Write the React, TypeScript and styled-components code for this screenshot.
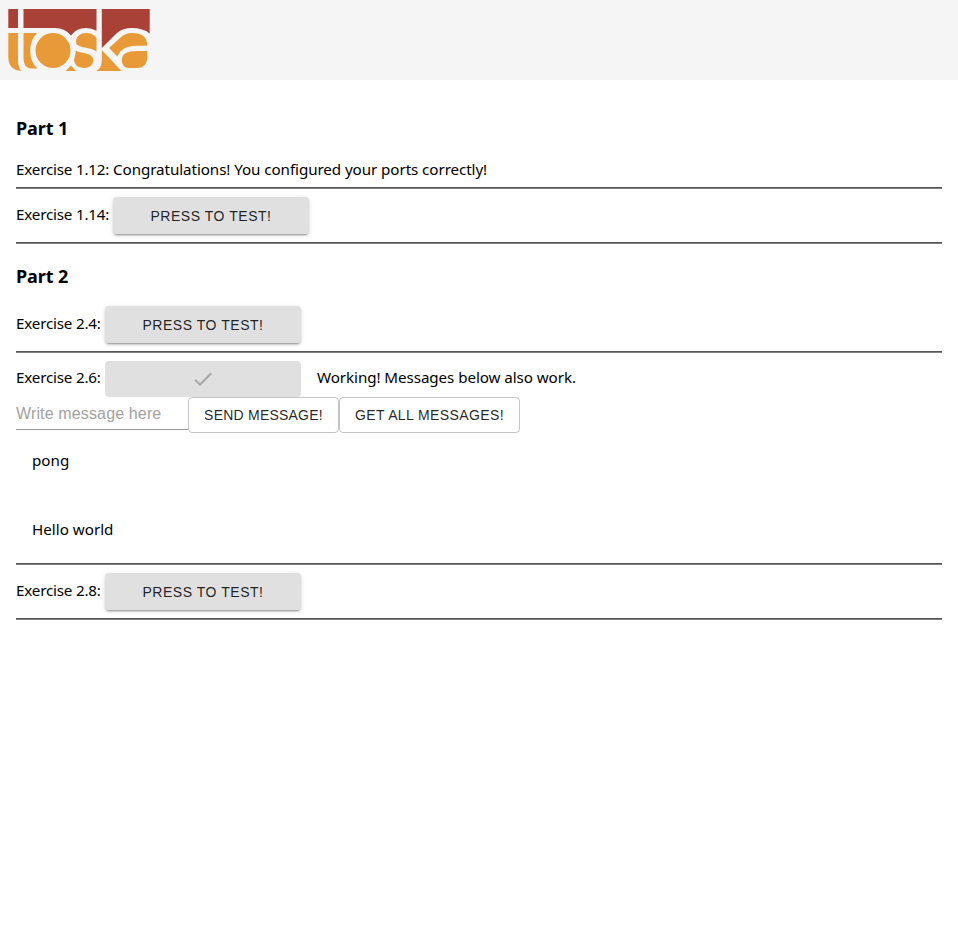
import React from "react";
import styled, { createGlobalStyle } from "styled-components";

const GlobalStyle = createGlobalStyle`
  body {
    margin: 0;
    background: #fff;
    color: #000;
    font: 15.2px/21px "Segoe UI", "Noto Sans", sans-serif;
  }
`;

const Header = styled.header`
  height: 80px;
  background: #f5f5f5;
`;

const Logo = styled.svg`
  display: block;
  width: 158px;
  height: 80px;
`;

const Content = styled.main`
  padding: 0 16px;
`;

const Title = styled.h3<{ $top: number; $bottom: number }>`
  margin: 0;
  padding: ${(p) => p.$top}px 0 ${(p) => p.$bottom}px;
  font-size: 18px;
  line-height: 25px;
  font-weight: 700;
  letter-spacing: -0.1px;
`;

const Row = styled.div<{ $height: number }>`
  display: flex;
  align-items: flex-start;
  height: ${(p) => p.$height}px;
`;

const Text = styled.span<{ $top?: number }>`
  flex: none;
  margin-top: ${(p) => p.$top ?? 0}px;
  letter-spacing: -0.08px;
  white-space: nowrap;
`;

const Label = styled(Text)<{ $width: number }>`
  width: ${(p) => p.$width}px;
  letter-spacing: -0.2px;
`;

const Rule = styled.hr`
  height: 1px;
  margin: 0;
  border: 0;
  border-top: 1px solid #555;
  background: #808080;
`;

const Button = styled.button`
  box-sizing: border-box;
  flex: none;
  display: flex;
  align-items: center;
  justify-content: center;
  height: 36px;
  padding: 0;
  border: 0;
  border-radius: 4px;
  color: rgba(0, 0, 0, 0.87);
  font: 14px/24px Arial, "Liberation Sans", sans-serif;
  letter-spacing: 0.53px;
  text-transform: uppercase;
  white-space: nowrap;
`;

const TestButton = styled(Button)`
  width: 196px;
  height: 37px;
  margin-top: 8px;
  background: #e0e0e0;
  box-shadow: 0 3px 1px -2px rgba(0, 0, 0, 0.2), 0 2px 2px 0 rgba(0, 0, 0, 0.14),
    0 1px 5px 0 rgba(0, 0, 0, 0.12);

  &:disabled {
    height: 36px;
    color: rgba(0, 0, 0, 0.26);
    box-shadow: none;
  }
`;

const OutlinedButton = styled(Button)<{ $width: number; $spacing: number }>`
  width: ${(p) => p.$width}px;
  border: 1px solid rgba(0, 0, 0, 0.23);
  background: transparent;
  letter-spacing: ${(p) => p.$spacing}px;
`;

const Input = styled.input`
  box-sizing: border-box;
  width: 172px;
  height: 33px;
  padding: 1px 0 0;
  border: 0;
  border-bottom: 1px solid #949494;
  outline: 0;
  background: transparent;
  font: 16px/19px Arial, "Liberation Sans", sans-serif;
  letter-spacing: 0.14px;

  &::placeholder {
    color: #a2a2a2;
    opacity: 1;
  }
`;

const Result = styled(Text)`
  margin-left: 16px;
`;

const Messages = styled.div`
  height: 130px;
  padding: 0 16px;
`;

const Message = styled.p`
  margin: 0;
  padding: 17px 0 31px;
`;

const ToskaLogo = () => (
  <Logo viewBox="0 0 158 80" aria-label="toska">
    <g fill="#a94137">
      <path d="M8.3 9H18V28H8.3Z" />
      <path d="M23.5 9H96.5V30.8Q91.5 28 86 28Q76 28 71 35.5Q65 28 55 28H23.5Z" />
      <path d="M101.8 9H149.7V33.5Q143 28 132 28Q122.5 28 117 33L101.8 48Z" />
    </g>
    <g fill="#e99a38">
      <path d="M8.3 33H18V60Q18 68 21.5 71Q8.3 70 8.3 57Z" />
      <path d="M23.5 33H37Q30.2 40 30.2 51Q30.2 62 37.5 68.5H31Q23.5 68 23.5 58Z" />
      <circle cx="53" cy="50.5" r="17.5" />
      <path d="M71 65.5L76 71H65.5Z" />
      <path d="M76.5 44.5C74.5 37 80 33 86 33Q93 33 96.5 38V51.5Q93 49 86 47.8Q80 47 76.5 44.5Z" />
      <path d="M75.7 50.5Q78 52 84 53Q93.3 54.5 93.3 60.5Q92.5 68 84 68Q74.5 67.5 74 60Q75.7 55 75.7 50.5Z" />
      <path d="M101.8 50L121.5 71H96.5Q101.8 68 101.8 60Z" />
      <path d="M109 48L120 38Q125 33 132 33Q147.3 33 147.3 45.8H136Q121 46.5 117.5 56.5Z" />
      <path d="M147.3 51H137Q122 51 121.7 60Q122 67 128 68H137Q147.3 68 147.3 56Z" />
    </g>
  </Logo>
);

const CheckIcon = () => (
  <svg width="24" height="24" viewBox="0 0 24 24" fill="currentColor">
    <path d="M9 16.17 4.83 12l-1.42 1.41L9 19 21 7l-1.41-1.41z" />
  </svg>
);

export default function App() {
  return (
    <>
      <GlobalStyle />
      <Header>
        <ToskaLogo />
      </Header>
      <Content>
        <Title $top={36} $bottom={18}>Part 1</Title>
        <Row $height={28}>
          <Label $width={97}>Exercise 1.12:</Label>
          <Text>Congratulations! You configured your ports correctly!</Text>
        </Row>
        <Rule />
        <Row $height={53}>
          <Label $width={97} $top={15}>Exercise 1.14:</Label>
          <TestButton>Press to test!</TestButton>
        </Row>
        <Rule />
        <Title $top={20} $bottom={9}>Part 2</Title>
        <Row $height={53}>
          <Label $width={89} $top={15}>Exercise 2.4:</Label>
          <TestButton>Press to test!</TestButton>
        </Row>
        <Rule />
        <Row $height={44}>
          <Label $width={89} $top={14}>Exercise 2.6:</Label>
          <TestButton disabled aria-label="Passed">
            <CheckIcon />
          </TestButton>
          <Result $top={14}>Working! Messages below also work.</Result>
        </Row>
        <Row $height={36}>
          <Input placeholder="Write message here" />
          <OutlinedButton $width={151} $spacing={0.22}>Send message!</OutlinedButton>
          <OutlinedButton $width={181} $spacing={0.4}>Get all messages!</OutlinedButton>
        </Row>
        <Messages>
          <Message>pong</Message>
          <Message>Hello world</Message>
        </Messages>
        <Rule />
        <Row $height={53}>
          <Label $width={89} $top={15}>Exercise 2.8:</Label>
          <TestButton>Press to test!</TestButton>
        </Row>
        <Rule />
      </Content>
    </>
  );
}
